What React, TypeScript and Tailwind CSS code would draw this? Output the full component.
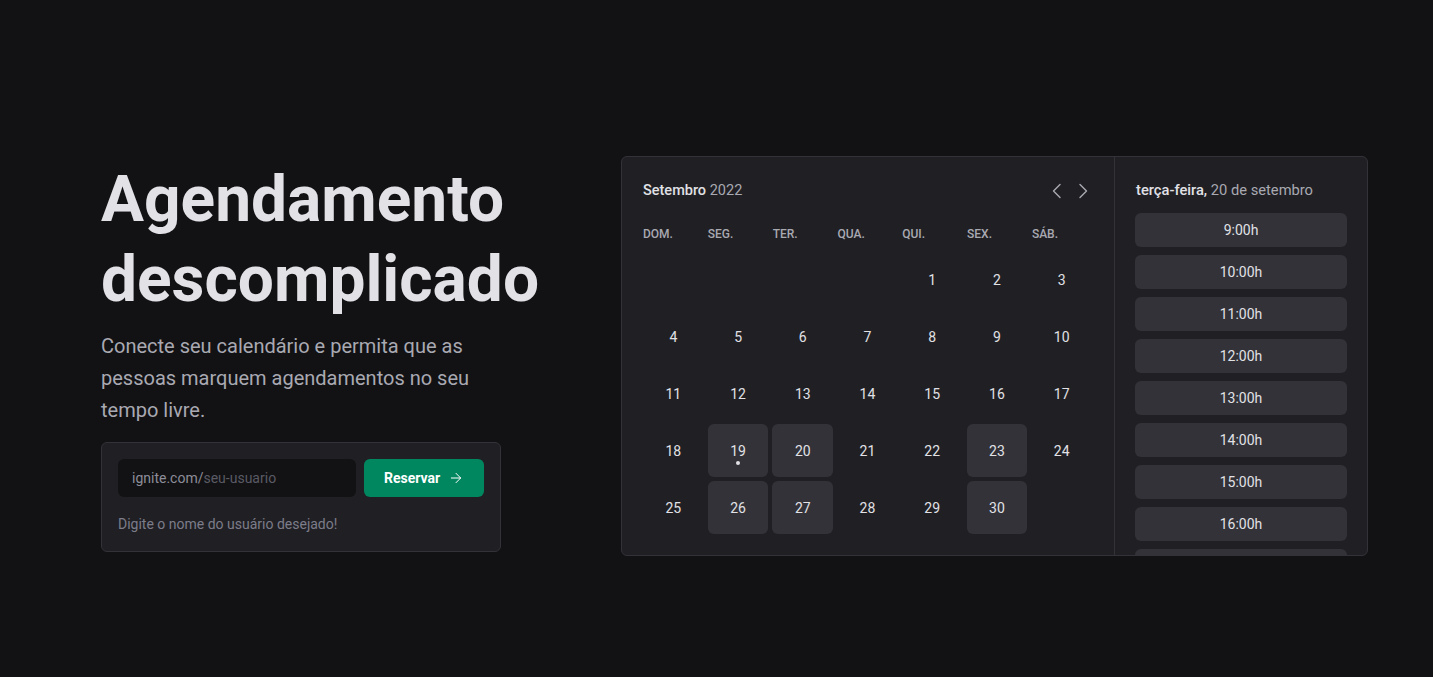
import { ArrowRight } from 'lucide-react';

const weekDays = ['dom.', 'seg.', 'ter.', 'qua.', 'qui.', 'sex.', 'sáb.'];

// null = empty slot before the 1st
const days: (number | null)[] = [null, null, null, null, ...Array.from({ length: 30 }, (_, i) => i + 1)];
const available = [19, 20, 23, 26, 27, 30];
const today = 19;

const hours = [9, 10, 11, 12, 13, 14, 15, 16, 17];

const Caret = ({ dir }: { dir: 'left' | 'right' }) => (
  <svg width="20" height="20" viewBox="0 0 20 20" fill="none" stroke="#a9a9b2" strokeWidth="1.4" strokeLinecap="round" strokeLinejoin="round">
    {dir === 'left' ? <polyline points="13,3.5 6.5,10 13,16.5" /> : <polyline points="7,3.5 13.5,10 7,16.5" />}
  </svg>
);

const App = () => {
  return (
    <div className="min-h-screen bg-[#121214] font-['Roboto',sans-serif] antialiased">
      <div className="flex items-center gap-10 pl-[101px] pt-[156px]">
        {/* Hero */}
        <div className="w-[480px] shrink-0">
          <h1 className="text-[64px] font-bold leading-[80px] text-[#e1e1e6]">
            Agendamento descomplicado
          </h1>
          <p className="mt-[10px] max-w-[400px] text-xl leading-8 text-[#a9a9b2]">
            Conecte seu calendário e permita que as pessoas marquem agendamentos no seu tempo livre.
          </p>

          <div className="mt-4 w-[400px] rounded-md border border-[#323238] bg-[#202024] p-4">
            <div className="flex gap-2">
              <div className="flex h-[38px] flex-1 items-center rounded-md bg-[#121214] px-[14px] text-sm">
                <span className="text-[#8d8d99]">ignite.com/</span>
                <span className="text-[#5a5a64]">seu-usuario</span>
              </div>
              <button className="flex h-[38px] w-[120px] items-center justify-center gap-2 rounded-md bg-[#00875f] text-sm font-bold text-white">
                Reservar
                <ArrowRight size={16} strokeWidth={1.5} />
              </button>
            </div>
            <p className="mt-4 text-sm leading-[22px] text-[#7c7c8a]">Digite o nome do usuário desejado!</p>
          </div>
        </div>

        {/* Calendar preview */}
        <div className="flex h-[400px] w-[747px] shrink-0 overflow-hidden rounded-md border border-[#323238] bg-[#202024]">
          <div className="flex-1 pl-[21px] pr-[22px] pt-[24px]">
            <div className="flex h-5 items-center justify-between">
              <span className="text-[14.5px] font-medium text-[#e1e1e6]">
                Setembro <span className="font-normal text-[#a9a9b2]">2022</span>
              </span>
              <div className="mr-[-1px] flex gap-[6px]">
                <Caret dir="left" />
                <Caret dir="right" />
              </div>
            </div>

            <div className="mt-[25px] grid grid-cols-7 gap-x-[4.7px]">
              {weekDays.map((d) => (
                <span key={d} className="text-xs font-medium uppercase leading-4 text-[#a9a9b2]">
                  {d}
                </span>
              ))}
            </div>

            <div className="mt-[11px] grid grid-cols-7 gap-1">
              {days.map((day, i) => {
                const isAvailable = day !== null && available.includes(day);
                return (
                  <div
                    key={i}
                    className={`relative flex h-[53px] items-center justify-center rounded-md text-sm text-[#e1e1e6] ${
                      isAvailable ? 'bg-[#323238]' : ''
                    }`}
                  >
                    {day}
                    {day === today && (
                      <span className="absolute bottom-[12px] left-1/2 h-1 w-1 -translate-x-1/2 rounded-full bg-[#e1e1e6]" />
                    )}
                  </div>
                );
              })}
            </div>
          </div>

          {/* Time picker */}
          <div className="w-[253px] shrink-0 overflow-hidden border-l border-[#323238] px-5 pt-[23px]">
            <p className="h-5 pl-px text-[14.7px] font-medium leading-5 text-[#e1e1e6]">
              terça-feira, <span className="font-normal text-[#a9a9b2]">20 de setembro</span>
            </p>
            <div className="mt-[13px] flex flex-col gap-2">
              {hours.map((h) => (
                <div
                  key={h}
                  className="flex h-[34px] shrink-0 items-center justify-center rounded-md bg-[#323238] text-sm text-[#e1e1e6]"
                >
                  {h}:00h
                </div>
              ))}
            </div>
          </div>
        </div>
      </div>
    </div>
  );
};

export default App;
